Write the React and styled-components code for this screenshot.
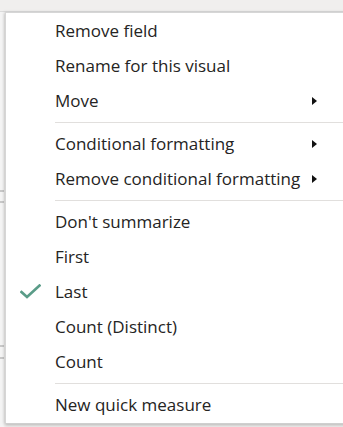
import React from "react";
import styled, { createGlobalStyle } from "styled-components";

const Global = createGlobalStyle`
  html, body { margin: 0; padding: 0; }
  body {
    width: 343px;
    height: 427px;
    overflow: hidden;
    background: #f3f2f1;
    font-family: "Open Sans", "Noto Sans", sans-serif;
  }
`;

const Page = styled.div`
  display: flex;
  flex-direction: column;
  width: 343px;
  height: 427px;
  overflow: hidden;
  background: #f3f2f1;
`;

const TopBar = styled.div`
  flex: none;
  height: 11px;
  border-bottom: 1px solid #dcdcdc;
  background: #f0efee;
`;

const Body = styled.div`
  flex: 1;
  display: flex;
  min-height: 0;
`;

const SideStrip = styled.div`
  flex: none;
  width: 4px;
  display: flex;
  flex-direction: column;
  background: #f4f4f4;
`;

const Segment = styled.div`
  flex: none;
  height: ${(p) => p.$h}px;
  border-bottom: 2px solid #c8c8c8;
`;

const Menu = styled.ul`
  flex: none;
  width: 360px;
  height: 412px;
  box-sizing: border-box;
  margin: 0 0 0 1px;
  padding: 0;
  list-style: none;
  background: #ffffff;
  border-left: 1px solid #d6d6d6;
  border-top: 1px solid #d6d6d6;
  border-bottom: 1px solid #cfcfcf;
  box-shadow: -1px 0 3px rgba(0, 0, 0, 0.12), 0 2px 3px rgba(0, 0, 0, 0.15);
`;

const Item = styled.li`
  display: flex;
  align-items: center;
  height: 35px;
  font-size: 17px;
  color: #252423;
  white-space: nowrap;
`;

const CheckSlot = styled.span`
  flex: none;
  width: 49px;
  display: flex;
  align-items: center;
  justify-content: flex-start;
  padding-left: 14px;
  box-sizing: border-box;
`;

const Label = styled.span`
  flex: none;
  width: 257px;
`;

const Arrow = styled.span`
  flex: none;
  width: 0;
  height: 0;
  border-top: 4px solid transparent;
  border-bottom: 4px solid transparent;
  border-left: 5px solid #111;
`;

const Separator = styled.li`
  height: 1px;
  margin: 4px 0 3px 49px;
  background: #e1dfdd;
`;

function Row({ label, submenu, checked }) {
  return (
    <Item>
      <CheckSlot>
        {checked && (
          <svg width="21" height="15" viewBox="0 0 21 15">
            <path
              d="M1.5 8 L7 13 L19.5 1.5"
              fill="none"
              stroke="#5a9c88"
              strokeWidth="2.6"
              strokeLinecap="square"
            />
          </svg>
        )}
      </CheckSlot>
      <Label>{label}</Label>
      {submenu && <Arrow />}
    </Item>
  );
}

export default function App() {
  return (
    <Page>
      <Global />
      <TopBar />
      <Body>
        <SideStrip>
          <Segment $h={178} />
          <Segment $h={9} />
          <Segment $h={142} />
          <Segment $h={10} />
        </SideStrip>
        <Menu>
          <Row label="Remove field" />
          <Row label="Rename for this visual" />
          <Row label="Move" submenu />
          <Separator />
          <Row label="Conditional formatting" submenu />
          <Row label="Remove conditional formatting" submenu />
          <Separator />
          <Row label="Don't summarize" />
          <Row label="First" />
          <Row label="Last" checked />
          <Row label="Count (Distinct)" />
          <Row label="Count" />
          <Separator />
          <Row label="New quick measure" />
        </Menu>
      </Body>
    </Page>
  );
}
